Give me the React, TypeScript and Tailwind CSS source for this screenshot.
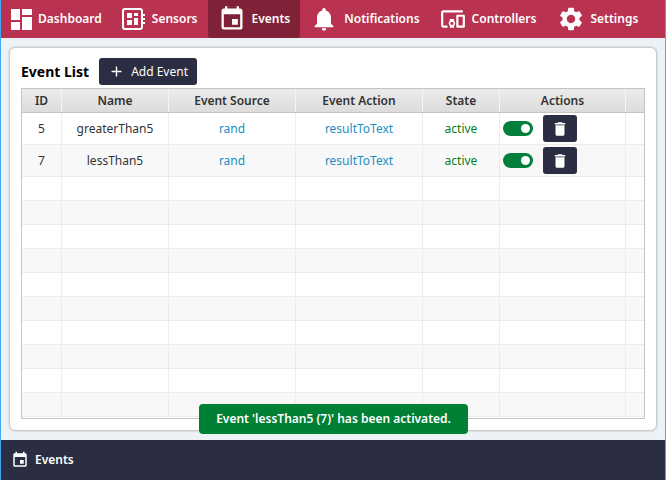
import { MdAdd, MdDelete, MdDevicesOther, MdEvent, MdNotifications, MdSettings } from "react-icons/md";

const columns = ["w-[40px]", "w-[107px]", "w-[127px]", "w-[127px]", "w-[77px]", "w-[126px]", "w-[19px]"];

function DashboardIcon() {
  return (
    <svg width="21" height="21" viewBox="0 0 21 21" fill="white">
      <rect x="0" y="0" width="9" height="11" />
      <rect x="11" y="0" width="10" height="6" />
      <rect x="0" y="13" width="9" height="8" />
      <rect x="11" y="8" width="10" height="13" />
    </svg>
  );
}

function SensorIcon() {
  return (
    <svg width="24" height="22" viewBox="0 0 24 22" fill="white">
      <rect x="1" y="1" width="19" height="20" rx="2" fill="none" stroke="white" strokeWidth="2" />
      <rect x="5" y="5" width="5" height="5" />
      <rect x="12" y="5" width="4" height="3" />
      <rect x="12" y="10" width="4" height="7" />
      <rect x="5" y="12" width="5" height="5" />
      <rect x="21" y="6" width="2" height="2" />
      <rect x="21" y="10" width="2" height="2" />
      <rect x="21" y="14" width="2" height="2" />
    </svg>
  );
}

function NavItem({ icon, label, active }: { icon: React.ReactNode; label: string; active?: boolean }) {
  return (
    <div className={`flex h-[38px] items-center gap-[6px] rounded-b-[3px] px-[10px] ${active ? "bg-[#7f2238]" : ""}`}>
      {icon}
      <span className="text-[12px] font-semibold text-white">{label}</span>
    </div>
  );
}

function Row({ cells, striped, tall }: { cells: React.ReactNode[]; striped: boolean; tall?: boolean }) {
  return (
    <div className={`flex border-b border-[#ececec] ${tall ? "h-[32px]" : "h-[24px]"} ${striped ? "bg-[#f8f8f8]" : "bg-white"}`}>
      {columns.map((w, i) => (
        <div key={i} className={`${w} flex shrink-0 items-center justify-center text-[12px] ${i < 6 ? "border-r border-[#ececec]" : ""}`}>
          {cells[i]}
        </div>
      ))}
    </div>
  );
}

function Actions() {
  return (
    <div className="flex w-full items-center gap-[10px] pl-[3px]">
      <div className="flex h-[15px] w-[30px] items-center justify-end rounded-full bg-[#00803a] pr-[3px]">
        <div className="h-[9px] w-[9px] rounded-full bg-white" />
      </div>
      <div className="flex h-[27px] w-[34px] items-center justify-center rounded-[3px] bg-[#2b2d42]">
        <MdDelete className="text-white" size={18} />
      </div>
    </div>
  );
}

function eventRow(name: string) {
  return [
    null,
    <span className="text-[#333]">{name}</span>,
    <span className="text-[#1a8fc4]">rand</span>,
    <span className="text-[#1a8fc4]">resultToText</span>,
    <span className="text-[#0a7d1e]">active</span>,
    <Actions />,
    null,
  ];
}

export default function App() {
  const headers = ["ID", "Name", "Event Source", "Event Action", "State", "Actions", ""];
  const first = eventRow("greaterThan5");
  first[0] = <span className="text-[#333]">5</span>;
  const second = eventRow("lessThan5");
  second[0] = <span className="text-[#333]">7</span>;

  return (
    <div className="flex h-[480px] w-[666px] flex-col border-x border-b border-[#3fa9f5] bg-[#edf2f6] font-['Noto_Sans','Open_Sans',sans-serif]">
      <nav className="flex h-[38px] shrink-0 items-center bg-[#b93250] pr-0">
        <NavItem icon={<DashboardIcon />} label="Dashboard" />
        <NavItem icon={<SensorIcon />} label="Sensors" />
        <NavItem icon={<MdEvent className="text-white" size={28} />} label="Events" active />
        <NavItem icon={<MdNotifications className="text-white" size={28} />} label="Notifications" />
        <NavItem icon={<MdDevicesOther className="text-white" size={26} />} label="Controllers" />
        <NavItem icon={<MdSettings className="text-white" size={28} />} label="Settings" />
      </nav>

      <main className="relative flex-1 px-[9px] py-[10px]">
        <div className="flex h-[382px] flex-col rounded-[5px] bg-white px-[11px] pt-[7px] shadow-[0_0_3px_rgba(0,0,0,0.45)]">
          <div className="flex h-[33px] items-center gap-[10px]">
            <h1 className="text-[14px] font-bold text-black">Event List</h1>
            <button className="flex h-[27px] items-center gap-[6px] rounded-[3px] bg-[#2b2d42] pl-[9px] pr-[9px] text-[12px] text-white">
              <MdAdd size={17} />
              Add Event
            </button>
          </div>
          <div className="mt-[0px] h-[331px] w-[624px] overflow-hidden border border-[#c4c4c4]">
            <div className="flex h-[24px] border-b border-[#c4c4c4] bg-gradient-to-b from-[#ececec] to-[#dcdcdc]">
              {headers.map((h, i) => (
                <div key={i} className={`${columns[i]} flex shrink-0 items-center justify-center text-[12px] font-semibold text-[#333] ${i < 6 ? "border-r border-[#f5f5f5]" : ""}`}>
                  {h}
                </div>
              ))}
            </div>
            <Row cells={first} striped={false} tall />
            <Row cells={second} striped tall />
            {[0, 1, 2, 3, 4, 5, 6, 7, 8, 9].map((i) => (
              <Row key={i} cells={[]} striped={i % 2 === 1} />
            ))}
          </div>
        </div>
        <div className="absolute left-[198px] top-[366px] flex h-[30px] w-[269px] items-center justify-center rounded-[4px] bg-[#008035] text-[12px] font-semibold text-white">
          Event 'lessThan5 (7)' has been activated.
        </div>
      </main>

      <footer className="flex h-[40px] shrink-0 items-center gap-[6px] bg-[#2b2d42] px-[10px]">
        <MdEvent className="text-white" size={18} />
        <span className="text-[12px] font-semibold text-white">Events</span>
      </footer>
    </div>
  );
}
